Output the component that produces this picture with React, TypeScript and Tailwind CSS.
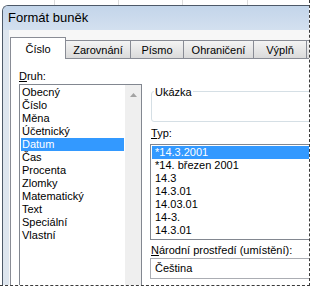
const druhItems = [
  "Obecný",
  "Číslo",
  "Měna",
  "Účetnický",
  "Datum",
  "Čas",
  "Procenta",
  "Zlomky",
  "Matematický",
  "Text",
  "Speciální",
  "Vlastní",
];

const typItems = ["*14.3.2001", "*14. březen 2001", "14.3", "14.3.01", "14.03.01", "14-3.", "14.3.01"];

const tabs = [
  { label: "Zarovnání", w: "w-[65px]" },
  { label: "Písmo", w: "w-[53px]" },
  { label: "Ohraničení", w: "w-[70px]" },
  { label: "Výplň", w: "w-[53px]" },
  { label: "", w: "w-[60px]" },
];

function Tab({ label, w }: { label: string; w: string }) {
  return (
    <div
      className={`flex h-[18px] shrink-0 items-center justify-center border-t border-r border-[#898c95] bg-gradient-to-b from-[#f4f4f4] to-[#dadada] pt-[2px] text-[11px] text-black ${w}`}
    >
      {label}
    </div>
  );
}

export default function App() {
  return (
    <div className="h-[289px] w-[311px] bg-white font-['Liberation_Sans',Arial,sans-serif] text-black">
      <div className="h-[286px] w-[310px] overflow-hidden border-r border-b border-dashed border-[#3a3a3a]">
        {/* spreadsheet behind the dialog */}
        <div className="flex h-[5px]">
          <div className="w-[55px] shrink-0 border-r border-[#dcdcdc]" />
          <div className="w-[64px] shrink-0 border-r border-[#dcdcdc]" />
          <div className="w-[64px] shrink-0 border-r border-[#dcdcdc]" />
          <div className="w-[65px] shrink-0 border-r border-[#dcdcdc]" />
        </div>

        {/* dialog window */}
        <div className="ml-[2px] w-[360px] rounded-tl-[6px] border-t border-l border-[#4d5968] bg-[#dfe7f0]">
          <div className="flex h-[24px] items-center rounded-tl-[5px] bg-gradient-to-b from-[#c3d5ea] to-[#d3e0ef] pl-[5px] text-[13px]">
            Formát buněk
          </div>

          <div className="flex">
            <div className="w-[6px] shrink-0 bg-[#dde5ee]" />
            <div className="flex-1 bg-[#f7f7f7] pt-[7px] pl-[1px]">
              {/* tabs */}
              <div className="flex h-[21px] items-end">
                <div className="relative z-10 -mb-[1px] flex h-[22px] w-[56px] shrink-0 items-center justify-center border-t border-r border-l border-[#898c95] bg-white pt-[2px] text-[11px]">
                  Číslo
                </div>
                {tabs.map((t, i) => (
                  <Tab key={i} label={t.label} w={t.w} />
                ))}
              </div>

              {/* panel */}
              <div className="flex h-[240px] gap-[8px] border-t border-l border-[#898c95] bg-white pt-[10px] pl-[8px] text-[11px]">
                {/* left column */}
                <div className="flex w-[123px] shrink-0 flex-col">
                  <div className="h-[14px] leading-[14px]">
                    <span className="underline">D</span>ruh:
                  </div>
                  <div className="mt-[1px] flex h-[220px] border border-[#828790]">
                    <div className="flex flex-1 flex-col p-[1px]">
                      {druhItems.map((item) => (
                        <div
                          key={item}
                          className={`h-[13px] pl-[1px] leading-[13px] ${item === "Datum" ? "bg-[#3399ff] text-white" : ""}`}
                        >
                          {item}
                        </div>
                      ))}
                    </div>
                    <div className="flex w-[16px] shrink-0 justify-center bg-[#efefef] pt-[8px]">
                      <svg width="7" height="4" viewBox="0 0 7 4">
                        <path d="M0 4 L3.5 0 L7 4 Z" fill="#a3a3a3" />
                      </svg>
                    </div>
                  </div>
                </div>

                {/* right column */}
                <div className="flex w-[200px] shrink-0 flex-col">
                  <div className="relative mt-[22px] ml-[1px] h-[31px] rounded-[3px] border border-[#d5dfe5]">
                    <span className="absolute -top-[7px] left-[2px] bg-white px-[1px] leading-[14px]">Ukázka</span>
                  </div>
                  <div className="mt-[4px] ml-[1px] h-[14px] leading-[14px]">
                    <span className="underline">T</span>yp:
                  </div>
                  <div className="mt-[4px] h-[96px] border border-[#828790] p-[1px]">
                    {typItems.map((item, i) => (
                      <div
                        key={i}
                        className={`h-[13px] pl-[3px] leading-[13px] ${i === 0 ? "bg-[#3399ff] text-white" : ""}`}
                      >
                        {item}
                      </div>
                    ))}
                  </div>
                  <div className="mt-[3px] ml-[1px] h-[14px] leading-[14px]">
                    <span className="underline">N</span>árodní prostředí (umístění):
                  </div>
                  <div className="mt-[1px] flex h-[21px] items-center border border-[#abadb3] pl-[4px]">Čeština</div>
                </div>
              </div>
            </div>
          </div>
        </div>
      </div>
    </div>
  );
}
